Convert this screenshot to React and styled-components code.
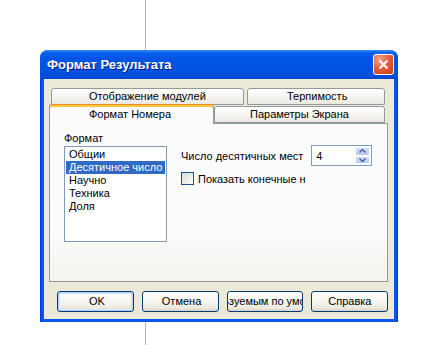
import React from 'react';
import styled, { createGlobalStyle } from 'styled-components';

const GlobalStyle = createGlobalStyle`
  html, body { margin: 0; padding: 0; }
  body {
    height: 345px;
    overflow: hidden;
    background: #fff linear-gradient(#b8b8b8, #b8b8b8) no-repeat 145px 0 / 1px 100%;
    font-family: "Liberation Sans", Arial, sans-serif;
    font-size: 11px;
    color: #000;
  }
`;

const Page = styled.div`
  padding: 50px 0 0 40px;
`;

const Window = styled.div`
  width: 358px;
  height: 272px;
  display: flex;
  flex-direction: column;
  border-radius: 8px 8px 0 0;
  background: linear-gradient(to right, #0831d9 0, #0058ee 2px, #0058ee calc(100% - 2px), #0831d9 100%);
`;

const TitleBar = styled.div`
  height: 29px;
  flex: none;
  display: flex;
  align-items: center;
  justify-content: space-between;
  padding: 0 4px 0 7px;
  border-radius: 8px 8px 0 0;
  background: linear-gradient(to bottom, #3c8cf8 0, #0a5fec 3px, #0055e5 8px, #0053e1 70%, #0048d6 100%);
`;

const Title = styled.span`
  color: #fff;
  font-weight: bold;
  font-size: 13px;
  text-shadow: 1px 1px #0a1883;
`;

const CloseButton = styled.div`
  width: 21px;
  height: 21px;
  box-sizing: border-box;
  border: 1px solid #fff;
  border-radius: 3px;
  background: radial-gradient(circle at 30% 25%, #f4a48a 0, #e4603e 45%, #cc3a12 100%);
  display: flex;
  align-items: center;
  justify-content: center;
`;

const Client = styled.div`
  flex: 1;
  margin: 0 4px 3px;
  background: #ece9d8;
  padding: 9px 6px 0 5px;
  display: flex;
  flex-direction: column;
`;

const TabRow = styled.div`
  display: flex;
  height: ${p => p.$h}px;
  padding-left: ${p => p.$indent || 0}px;
  gap: ${p => p.$gap || 0}px;
`;

const Tab = styled.div`
  width: ${p => p.$w}px;
  height: ${p => (p.$active ? 20 : 17)}px;
  margin-top: ${p => (p.$active ? -2 : 0)}px;
  margin-bottom: ${p => (p.$active ? -1 : 0)}px;
  box-sizing: border-box;
  border: 1px solid #919b9c;
  border-bottom: ${p => (p.$active ? 'none' : '1px solid #919b9c')};
  border-top-color: ${p => (p.$active ? '#e68b2c' : '#919b9c')};
  border-radius: 3px 3px 0 0;
  background: ${p => (p.$active ? '#fcfcfe' : 'linear-gradient(to bottom, #fff 0, #f4f3ee 60%, #e9e8e2 100%)')};
  box-shadow: ${p => (p.$active ? 'inset 0 2px #ffc73c' : 'none')};
  padding-left: ${p => p.$pad}px;
  line-height: ${p => (p.$active ? 18 : 15)}px;
  white-space: nowrap;
  ${p => p.$active && 'position: relative; z-index: 1;'}
`;

const Panel = styled.div`
  height: 159px;
  box-sizing: border-box;
  border: 1px solid #919b9c;
  background: linear-gradient(to bottom, #fcfcfe 0, #fbfbfb 70%, #f4f3ee 100%);
  padding: 8px 0 0 14px;
  display: grid;
  grid-template-columns: 103px 1fr;
  grid-template-rows: 14px auto;
  column-gap: 14px;
`;

const Label = styled.div`
  line-height: 13px;
  grid-column: 1 / -1;
`;

const ListBox = styled.div`
  width: 103px;
  height: 96px;
  box-sizing: border-box;
  border: 1px solid #7f9db9;
  background: #fff;
  padding: 1px;
  display: flex;
  flex-direction: column;
`;

const ListItem = styled.div`
  height: 13px;
  line-height: 13px;
  padding-left: 3px;
  white-space: nowrap;
  overflow: hidden;
  background: ${p => (p.$selected ? '#316ac5' : 'transparent')};
  color: ${p => (p.$selected ? '#fff' : '#000')};
`;

const Controls = styled.div`
  display: flex;
  flex-direction: column;
  margin-top: -1px;
`;

const FieldRow = styled.div`
  display: flex;
  align-items: center;
  gap: ${p => p.$gap}px;
  margin-top: ${p => p.$top || 0}px;
`;

const Spin = styled.div`
  width: 61px;
  height: 21px;
  box-sizing: border-box;
  border: 1px solid #7f9db9;
  background: #fff;
  display: flex;
  align-items: center;
  padding: 1px;
`;

const SpinValue = styled.span`
  flex: 1;
  padding-left: 3px;
`;

const SpinButtons = styled.div`
  width: 15px;
  height: 100%;
  display: flex;
  flex-direction: column;
`;

const SpinHalf = styled.div`
  flex: 1;
  display: flex;
  align-items: center;
  justify-content: center;
  border: 1px solid #fff;
  border-radius: 2px;
  background: linear-gradient(to bottom, #cfdcfd, #b6cbf7);
`;

const CheckBox = styled.div`
  width: 13px;
  height: 13px;
  box-sizing: border-box;
  border: 1px solid #1c5180;
  background: linear-gradient(135deg, #dcdcd7 0, #f3f3ef 70%, #fff 100%);
`;

const ButtonRow = styled.div`
  display: flex;
  gap: 8px;
  padding-left: 8px;
  margin-top: 9px;
`;

const Button = styled.div`
  width: 77px;
  height: 21px;
  box-sizing: border-box;
  border: 1px solid #003c74;
  border-radius: 3px;
  background: linear-gradient(to bottom, #fff 0, #f6f5f0 50%, #ece9dd 85%, #d6d0c5 100%);
  box-shadow: ${p => (p.$default ? 'inset 0 0 0 1px #b7d1fb, inset 0 0 0 2px #d6e4fc' : 'none')};
  padding-left: ${p => Math.max(p.$pad, 0)}px;
  line-height: 19px;
  overflow: hidden;
  white-space: nowrap;
`;

const ButtonText = styled.span`
  margin-left: ${p => Math.min(p.$pad, 0)}px;
`;

const Arrow = ({ up }) => (
  <svg width="7" height="4" viewBox="0 0 7 4">
    <path d={up ? 'M0.5 3.5 L3.5 0.5 L6.5 3.5' : 'M0.5 0.5 L3.5 3.5 L6.5 0.5'} fill="none" stroke="#4d6185" strokeWidth="1.4" />
  </svg>
);

const formats = ['Общии', 'Десятичное число', 'Научно', 'Техника', 'Доля'];

const buttons = [
  { text: 'OK', pad: 31, def: true },
  { text: 'Отмена', pad: 19 },
  { text: 'Используемым по умолчанию', pad: -36 },
  { text: 'Справка', pad: 16 },
];

export default function App() {
  return (
    <Page>
      <GlobalStyle />
      <Window>
        <TitleBar>
          <Title>Формат Результата</Title>
          <CloseButton>
            <svg width="11" height="11" viewBox="0 0 11 11">
              <path d="M1.5 1.5 L9.5 9.5 M9.5 1.5 L1.5 9.5" stroke="#fff" strokeWidth="2" />
            </svg>
          </CloseButton>
        </TitleBar>
        <Client>
          <TabRow $h={18} $indent={2} $gap={3}>
            <Tab $w={193} $pad={37}>Отображение модулей</Tab>
            <Tab $w={138} $pad={39}>Терпимость</Tab>
          </TabRow>
          <TabRow $h={17}>
            <Tab $w={165} $pad={39} $active>Формат Номера</Tab>
            <Tab $w={171} $pad={35}>Параметры Экрана</Tab>
          </TabRow>
          <Panel>
            <Label>Формат</Label>
            <ListBox>
              {formats.map((f, i) => (
                <ListItem key={f} $selected={i === 1}>{f}</ListItem>
              ))}
            </ListBox>
            <Controls>
              <FieldRow $gap={8}>
                <span>Число десятичных мест</span>
                <Spin>
                  <SpinValue>4</SpinValue>
                  <SpinButtons>
                    <SpinHalf><Arrow up /></SpinHalf>
                    <SpinHalf><Arrow /></SpinHalf>
                  </SpinButtons>
                </Spin>
              </FieldRow>
              <FieldRow $gap={4} $top={6}>
                <CheckBox />
                <span>Показать конечные н</span>
              </FieldRow>
            </Controls>
          </Panel>
          <ButtonRow>
            {buttons.map(b => (
              <Button key={b.text} $default={b.def} $pad={b.pad}>
                <ButtonText $pad={b.pad}>{b.text}</ButtonText>
              </Button>
            ))}
          </ButtonRow>
        </Client>
      </Window>
    </Page>
  );
}
